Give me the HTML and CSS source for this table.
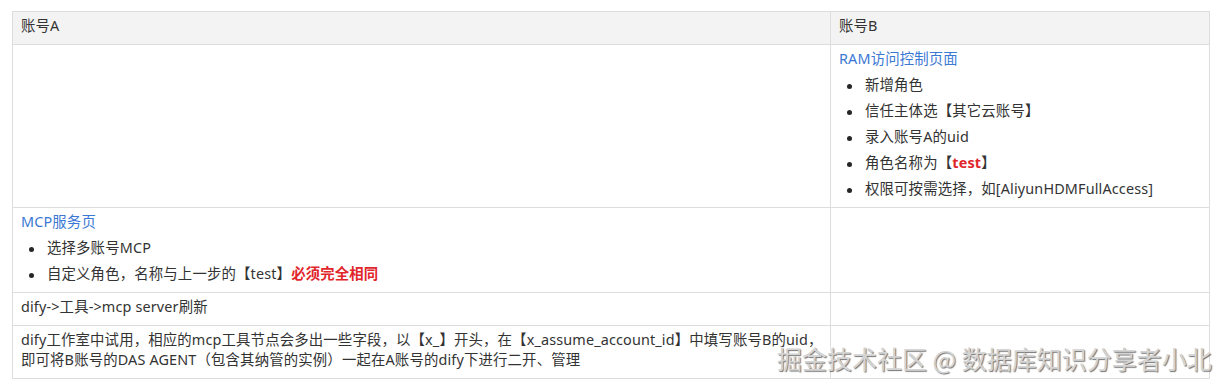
FILE: index.html
```html
<!DOCTYPE html>
<html lang="zh-CN">
<head>
<meta charset="utf-8">
<title>账号</title>
<link rel="stylesheet" href="styles.css">
</head>
<body>
<div class="page">
  <table class="grid">
    <colgroup><col class="col-a"><col class="col-b"></colgroup>
    <thead>
      <tr><th>账号A</th><th>账号B</th></tr>
    </thead>
    <tbody>
      <tr class="row-tall">
        <td></td>
        <td>
          <a class="link" href="#">RAM访问控制页面</a>
          <ul class="list">
            <li>新增角色</li>
            <li>信任主体选【其它云账号】</li>
            <li>录入账号A的uid</li>
            <li>角色名称为【<strong class="red">test</strong>】</li>
            <li>权限可按需选择，如[AliyunHDMFullAccess]</li>
          </ul>
        </td>
      </tr>
      <tr>
        <td>
          <a class="link" href="#">MCP服务页</a>
          <ul class="list">
            <li>选择多账号MCP</li>
            <li>自定义角色，名称与上一步的【test】<strong class="red">必须完全相同</strong></li>
          </ul>
        </td>
        <td></td>
      </tr>
      <tr>
        <td>dify-&gt;工具-&gt;mcp server刷新</td>
        <td></td>
      </tr>
      <tr>
        <td>dify工作室中试用，相应的mcp工具节点会多出一些字段，以【x_】开头，在【x_assume_account_id】中填写账号B的uid，<br>即可将B账号的DAS AGENT（包含其纳管的实例）一起在A账号的dify下进行二开、管理</td>
        <td></td>
      </tr>
    </tbody>
  </table>
  <div class="watermark">掘金技术社区 @ 数据库知识分享者小北</div>
</div>
</body>
</html>
```
FILE: styles.css
```css
html, body {
  margin: 0;
  padding: 0;
  background: #ffffff;
}
.page {
  position: relative;
  padding: 11px 0 0 12px;
  font-family: "Noto Sans", "Noto Sans CJK SC", sans-serif;
  font-size: 14.4px;
  letter-spacing: 0.15px;
  color: #333333;
}
.grid {
  border-collapse: collapse;
  width: 1197px;
  table-layout: fixed;
}
.col-a { width: 818px; }
.col-b { width: 379px; }
.grid th,
.grid td {
  border: 1px solid #dddddd;
  padding: 4px 8px 8px;
  line-height: 20px;
  text-align: left;
  vertical-align: top;
  font-weight: normal;
  white-space: nowrap;
}
.grid th {
  background: #f3f3f3;
}
.grid td {
  height: 20px;
}
.link {
  color: #3b78d4;
  text-decoration: none;
  display: block;
}
.list {
  margin: 0;
  padding: 0 0 0 26px;
  list-style: none;
}
.list li {
  margin: 6px 0 0;
  line-height: 20px;
}
.list li::before {
  content: "";
  display: inline-block;
  width: 5px;
  height: 5px;
  border-radius: 50%;
  background: #262626;
  margin: 0 13px 0 -18px;
  vertical-align: middle;
}
.red {
  color: #e1262b;
  font-weight: bold;
}
.watermark {
  position: absolute;
  left: 777px;
  top: 343px;
  font-size: 25px;
  line-height: 30px;
  letter-spacing: 0;
  font-family: "Noto Sans CJK SC", sans-serif;
  color: #d4d4d4;
  text-shadow: 1px 1px 1px rgba(0,0,0,0.55), -1px -1px 0 rgba(255,255,255,0.8);
  white-space: nowrap;
}
```
